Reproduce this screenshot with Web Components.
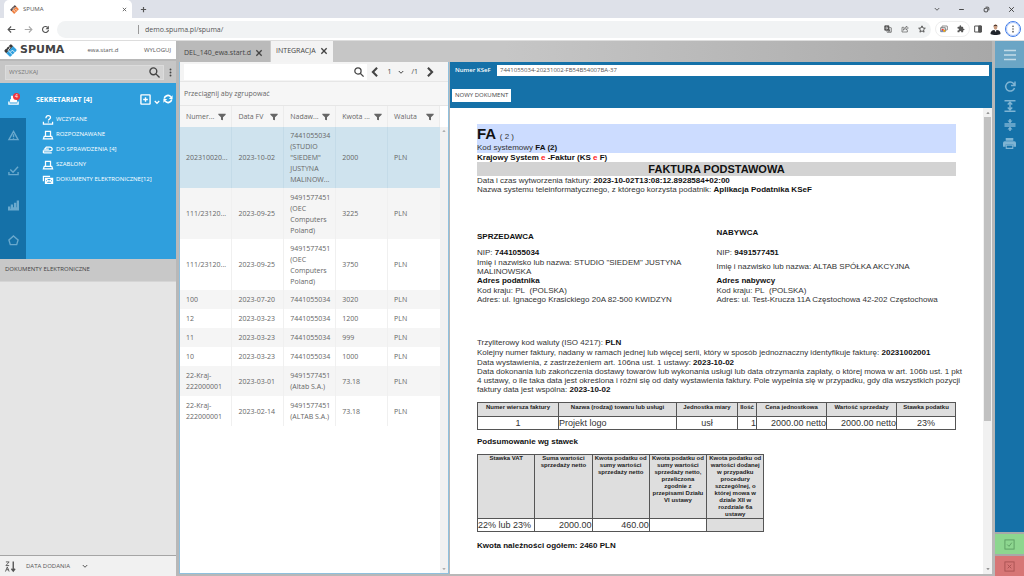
<!DOCTYPE html>
<html lang="pl">
<head>
<meta charset="utf-8">
<title>SPUMA</title>
<style>
  html, body { margin: 0; height: 100%; }
  body {
    --blue: #1571a8; --sky: #2f9fdd; --line: #b4b4b4;
    font: 7px/11px "Open Sans", "Noto Sans", sans-serif;
    color: #555; background: #e4e4e4;
    display: flex; flex-direction: column; min-height: 100vh; overflow: hidden;
  }
  spuma-app { flex: 1; min-height: 0; }
</style>
</head>
<body>
<browser-tabs></browser-tabs>
<address-bar></address-bar>
<spuma-app></spuma-app>

<script>
const ICONS = {
  logo: '<g transform="rotate(45 12 12)"><path fill="var(--a,#3a3a3a)" stroke="none" d="M4 5a2 2 0 0 1 2-2h4v18H6a2 2 0 0 1-2-2z"/><path fill="var(--b,#2f9fdd)" stroke="none" d="M10 3h8a2 2 0 0 1 2 2v14a2 2 0 0 1-2 2h-8z"/><path stroke="#fff" stroke-width="1.4" fill="none" d="M3 9h5v6h6V9h7M3 15h2M14 15h7"/></g>',
  close: '<path d="M4 4 20 20M20 4 4 20"/>',
  plus: '<path d="M12 3v18M3 12h18"/>',
  down: '<path d="M3 8l9 9 9-9"/>',
  left: '<path d="M17 2 7 12l10 10"/>',
  right: '<path d="M7 2l10 10L7 22"/>',
  minus: '<path d="M4 12h16"/>',
  restore: '<rect x="4" y="8" width="12" height="12" rx="3"/><path d="M9 4h8a3 3 0 0 1 3 3v8"/>',
  back: '<path d="M22 12H3M11 4l-8 8 8 8"/>',
  forward: '<path d="M2 12h19M13 4l8 8-8 8"/>',
  reload: '<path d="M20 13a8 8 0 1 1-2.500-7"/><path fill="currentColor" stroke="none" d="M21 2v9h-9z"/>',
  translate: '<rect x="9" y="8" width="13" height="14" rx="1"/><rect x="2" y="2" width="13" height="14" rx="1" fill="currentColor"/><path d="M13 18h6M16 13v2M18 14c-1 3-3 5-5 6M14 14c1 3 3 5 5 6"/><path stroke="#fff" d="M11 7.500C9 5 5.500 6 5.500 9.200S10 13 11 10H8.500"/>',
  share: '<path d="M9 7H3v14h16v-6"/><path d="M7 16c0-6 4-9 9-9V3l6 6-6 6v-4c-4 0-7 1-9 5z"/>',
  star: '<path d="M12 2.500l2.900 6.500 7 .7-5.300 4.700 1.600 7L12 17.700l-6.200 3.700 1.600-7L2 9.700l7-.7z"/>',
  shots: '<rect x="6" y="3" width="16" height="12" rx="1"/><path fill="#e8eaed" d="M2 8h14v12H2z"/><circle cx="8" cy="15" r="3.500" fill="#e94235" stroke="none"/><circle cx="13" cy="17" r="3" fill="#f9ab00" stroke="none"/><circle cx="6" cy="18" r="2.500" fill="#4285f4" stroke="none"/>',
  puzzle: '<path fill="currentColor" stroke="none" d="M20 11h-1.500V7a2 2 0 0 0-2-2h-4V3.500a2.500 2.500 0 0 0-5 0V5h-4a2 2 0 0 0-2 2v3.800H3a2.700 2.700 0 0 1 0 5.400H1.500V20a2 2 0 0 0 2 2h3.800v-1.500a2.700 2.700 0 0 1 5.400 0V22h3.800a2 2 0 0 0 2-2v-4H20a2.500 2.500 0 0 0 0-5z"/>',
  panel: '<path d="M2 3h20v18H2z"/><path fill="currentColor" d="M14 3h8v18h-8z"/>',
  avatar: '<path fill="#20242b" stroke="none" d="M1 22c0-6 4-9 8-9h6c5 0 8 3 8 9-6 3-16 3-22 0z"/><path fill="#fff" stroke="none" d="M9 12h5l-1 6z"/><ellipse cx="12" cy="6.500" rx="4" ry="6" fill="#c89b80" stroke="none"/><path fill="#33251e" stroke="none" d="M7.500 6C7 0 17 0 16.500 6 15 3 9 3 7.500 6z"/>',
  dots: '<g fill="currentColor" stroke="none"><circle cx="12" cy="4" r="2.500"/><circle cx="12" cy="12" r="2.500"/><circle cx="12" cy="20" r="2.500"/></g>',
  search: '<circle cx="9.500" cy="9.500" r="7.500"/><path d="M15 15l8 8"/>',
  stamp: '<path d="M6 3h12v12H6z"/><path d="M6 15H3l-2 6h22l-2-6h-3"/>',
  tray: '<path fill="currentColor" d="M8 3h9v6H8zM6 11h12v4H6z"/><path d="M2 14v6h20v-6"/>',
  question: '<path d="M7 8c0-8 11-8 11-2 0 4-5 4-5 7M1 16v6h22v-6"/><path d="M13 15.500v2.500"/>',
  swap: '<path d="M1 19h20M1 19v-5h15c8 0 8-9 0-9H8L4 10h10"/>',
  mail: '<path d="M1 15V3h16M6 8h17v12H6zM6 9l8.500 6L23 9M6 19l6-5M23 19l-6-5"/>',
  warn: '<path d="M12 3 22 21H2z"/><path d="M12 9v6M12 17v2"/>',
  check: '<path d="M2 15v6h20v-6M5 10l6 6L22 4"/>',
  chart: '<path fill="currentColor" stroke="none" d="M0 14h5v5h1v-9h5v6h2V6h5v10h1V1h5v22H0z"/>',
  home: '<path d="M12 2 22 11 19 21H5L2 11z"/>',
  addbox: '<rect x="2" y="2" width="20" height="20" rx="1"/><path d="M12 7v10M7 12h10"/>',
  sync: '<path d="M3 11a9 9 0 0 1 16-4M21 13a9 9 0 0 1-16 4"/><path fill="currentColor" stroke="none" d="M23 3v9h-9zM1 21v-9h9z"/>',
  funnel: '<path fill="currentColor" stroke="none" d="M1 2h22v3l-8 8v9l-6-2v-7L1 5z"/>',
  burger: '<path d="M0 3h24M0 12h24M0 21h24"/>',
  refresh: '<path d="M21 14a9 9 0 1 1-2-9l3 4M22 1v8h-8"/>',
  expand: '<path d="M1 1.500h22M1 22.500h22M12 5v14M7.500 9 12 4.500 16.500 9M7.500 15l4.500 4.500 4.500-4.500"/>',
  collapse: '<path d="M1 10h22M1 14h22M12 0v5M12 24v-5"/><path fill="currentColor" stroke="none" d="M7 3h10l-5 6zM7 21h10l-5-6z"/>',
  print: '<path fill="currentColor" stroke="none" d="M5 2h14v5H5zM3 8h18a3 3 0 0 1 3 3v7h-5v-4H5v4H0v-7a3 3 0 0 1 3-3z"/><path d="M6 15h12v6H6z"/>',
  okbox: '<rect x="2" y="2" width="20" height="20"/><path d="M7 12l4 4 6-8"/>',
  nobox: '<rect x="2" y="2" width="20" height="20"/><path d="M8 8l8 8M16 8l-8 8"/>',
  sort: '<path d="M18 1v20M14 17l4 5 4-5"/><path stroke-width="2" d="M2 2h7L2 10h7M1 23l4-10 4 10M3 19h5"/>',
  up: '<path fill="currentColor" stroke="none" d="M2 17l10-11 10 11z"/>',
  dn: '<path fill="currentColor" stroke="none" d="M2 7l10 11L22 7z"/>'
};

const RESET = `
  *, *::before { box-sizing: border-box; }
  button { font: inherit; color: inherit; background: none; border: 0; padding: 0; margin: 0; display: inline-flex; align-items: center; justify-content: center; }
  input { font: inherit; color: inherit; border: 0; padding: 0; margin: 0; min-width: 0; outline: 0; }
  a { color: inherit; text-decoration: none; }
`;

class Part extends HTMLElement {
  constructor() {
    super();
    this.attachShadow({ mode: 'open' });
  }
  connectedCallback() {
    this.shadowRoot.innerHTML = `<style>${RESET}${this.styles()}</style>${this.markup()}`;
  }
  styles() { return ''; }
  markup() { return ''; }
}

customElements.define('ui-icon', class extends Part {
  styles() {
    const s = this.getAttribute('size') || 10;
    return `:host { display: block; flex: none; width: ${s}px; height: ${s}px; }
      svg { display: block; width: 100%; height: 100%; overflow: visible; fill: none; stroke: currentColor; stroke-width: ${this.getAttribute('weight') || 2}; }`;
  }
  markup() { return `<svg viewBox="0 0 24 24" aria-hidden="true">${ICONS[this.getAttribute('name')]}</svg>`; }
});
const icon = (name, size, weight = 2) => `<ui-icon name="${name}" size="${size}" weight="${weight}"></ui-icon>`;

customElements.define('browser-tabs', class extends Part {
  styles() { return `
    :host { display: flex; align-items: center; height: 18px; flex: none; background: #dee1e9; padding: 0 9px 0 4px; }
    .tab { display: flex; align-items: center; gap: 4px; align-self: stretch; width: 128px; padding: 0 5px 0 6px; background: #fff; border-radius: 5px 5px 0 0; --a: #5a4a48; --b: #f08040; }
    .tab span { flex: 1; font-size: 6px; }
    .add { margin-left: 8px; }
    .win { margin-left: auto; display: flex; gap: 18px; color: #333; }`; }
  markup() { return `
    <div class="tab">${icon('logo', 9)}<span>SPUMA</span><button aria-label="Zamknij kartę">${icon('close', 5, 4)}</button></div>
    <button class="add" aria-label="Nowa karta">${icon('plus', 7, 4)}</button>
    <div class="win"><button aria-label="Karty">${icon('down', 6, 3)}</button><button aria-label="Minimalizuj">${icon('minus', 7, 3)}</button>
    <button aria-label="Przywróć">${icon('restore', 7, 3)}</button><button aria-label="Zamknij">${icon('close', 7, 3)}</button></div>`; }
});

customElements.define('address-bar', class extends Part {
  styles() { return `
    :host { box-sizing: border-box; display: flex; align-items: center; gap: 8px; height: 23px; flex: none; background: #fff; border-bottom: 1px solid #ddd; padding: 0 3px 0 7px; color: #555; }
    .fwd { color: #aaa; }
    .box { flex: 1; display: flex; align-items: center; gap: 9px; height: 17px; margin-left: -1px; padding: 0 5px 0 81px; border-radius: 9px; background: #f1f3f4; }
    .box input { flex: 1; background: none; border-left: 1px solid #999; padding-left: 6px; height: 9px; line-height: 9px; }
    .pill { display: flex; gap: 9px; padding: 3px 4px; margin: 0 -4px; border: 1px solid #eee; border-radius: 8px; }
    .menu { width: 16px; height: 16px; border: 1px solid #3f7be8; border-radius: 50%; outline: 1px solid #a9c4f8; outline-offset: -2px; margin-left: -4px; }`; }
  markup() { return `
    <button aria-label="Wstecz">${icon('back', 9, 3)}</button><button class="fwd" aria-label="Dalej">${icon('forward', 9, 3)}</button><button aria-label="Odśwież">${icon('reload', 9, 3)}</button>
    <div class="box"><input aria-label="Adres" value="demo.spuma.pl/spuma/">
      <button aria-label="Tłumacz">${icon('translate', 8)}</button><button aria-label="Udostępnij">${icon('share', 8)}</button><button aria-label="Zakładka">${icon('star', 8, 3)}</button></div>
    <div class="pill"><button aria-label="Zrzuty">${icon('shots', 8)}</button><button aria-label="Rozszerzenia">${icon('puzzle', 8)}</button></div>
    <button aria-label="Panel boczny">${icon('panel', 8, 3)}</button><button aria-label="Profil">${icon('avatar', 11)}</button>
    <button class="menu" aria-label="Menu">${icon('dots', 8)}</button>`; }
});

customElements.define('spuma-app', class extends Part {
  styles() { return `
    :host { display: grid; grid-template-columns: 176px minmax(0, 1fr) 29px; gap: 3px; background: #b8b8b8; }
    main { display: flex; flex-direction: column; min-height: 0; min-width: 0; }
    .split { flex: 1; min-height: 0; display: grid; grid-template-columns: 270px minmax(0, 1fr); gap: 1px; padding-bottom: 2px; }`; }
  markup() { return `
    <side-bar></side-bar>
    <main><work-tabs></work-tabs><div class="split"><invoice-grid></invoice-grid><invoice-view></invoice-view></div></main>
    <action-rail></action-rail>`; }
});

customElements.define('side-bar', class extends Part {
  styles() { return `
    :host { display: flex; flex-direction: column; min-height: 0; background: #e5e5e5; }
    header { display: flex; align-items: center; height: 20px; padding: 0 5px 0 4px; background: #fff; border-bottom: 2px solid #b8b8b8; }
    header b { font: bold 11px/14px "DejaVu Sans", sans-serif; color: #444; margin-left: 3px; }
    .user { margin-left: 23px; font-size: 6px; }
    .out { margin-left: auto; font-size: 6px; }
    .search { display: flex; align-items: center; gap: 2px; height: 22px; padding: 0 1px 0 5px; background: #c6c6c6; color: #444; }
    .search label { flex: 1; display: flex; align-items: center; height: 15px; padding: 0 3px; background: #d3d3d3; border: 1px solid #dcdcdc; }
    .search input { flex: 1; background: none; font-size: 6px; }
    .search input::placeholder { color: #777; opacity: 1; }
    h2 { margin: 0; height: 23px; padding: 5px; font-size: 6px; line-height: 11px; font-weight: 400; color: #444; background: #c8c8c8; border-bottom: 1px solid #d5d5d5; }
    footer { margin-top: auto; display: flex; align-items: center; gap: 10px; height: 21px; padding: 0 5px; border-top: 1px solid #a5a5a5; background: #f1f1f1; font-size: 6px; }
    footer button { gap: 12px; }`; }
  markup() { return `
    <header>${icon('logo', 13)}<b>SPUMA</b><span class="user">ewa.start.d</span><a class="out" href="#">WYLOGUJ</a></header>
    <div class="search"><label><input placeholder="WYSZUKAJ" aria-label="Wyszukaj">${icon('search', 11, 3)}</label><button aria-label="Więcej">${icon('dots', 9)}</button></div>
    <module-menu></module-menu>
    <h2>DOKUMENTY ELEKTRONICZNE</h2>
    <footer><button aria-label="Sortuj">${icon('sort', 11, 3)}</button><button>DATA DODANIA ${icon('down', 6, 4)}</button></footer>`; }
});

customElements.define('module-menu', class extends Part {
  styles() { return `
    :host { display: grid; grid-template-columns: 26px 1fr; background: var(--sky); color: #fff; height: 176px; }
    nav { display: grid; grid-auto-rows: 35px; background: var(--blue); color: #6aa9cd; }
    nav button { position: relative; }
    nav button.on { background: var(--sky); color: #fff; }
    .badge { position: absolute; left: 13px; top: 10px; width: 7px; height: 7px; border-radius: 50%; background: #f0323c; color: #fff; font-size: 5px; line-height: 7px; text-align: center; }
    .body { padding: 8px 3px 0 10px; }
    .head { display: flex; align-items: center; height: 16px; font-weight: 700; }
    .head h1 { margin: 0 auto 0 0; font-size: 7px; }
    .head div { display: flex; gap: 3px; align-items: center; }
    .head div :nth-child(2) { align-self: end; }
    ul { list-style: none; margin: 5px 0 0; padding: 0 0 0 7px; font-size: 6px; font-weight: 500; }
    li a { display: flex; align-items: center; gap: 3px; height: 15px; white-space: nowrap; }`; }
  markup() {
    const items = [['question', 'WCZYTANE'], ['stamp', 'ROZPOZNAWANE'], ['swap', 'DO SPRAWDZENIA [4]'], ['stamp', 'SZABLONY'], ['mail', 'DOKUMENTY ELEKTRONICZNE[12]']];
    const nav = [['warn', 'Alerty'], ['check', 'Zadania'], ['chart', 'Raporty'], ['home', 'Start']];
    return `<nav><button class="on" aria-label="Sekretariat">${icon('tray', 11, 3)}<span class="badge">4</span></button>
      ${nav.map(n => `<button aria-label="${n[1]}">${icon(n[0], 11, 3)}</button>`).join('')}</nav>
      <div class="body"><div class="head"><h1>SEKRETARIAT [4]</h1><div><button aria-label="Dodaj">${icon('addbox', 11, 3)}</button><button aria-label="Rozwiń">${icon('down', 6, 5)}</button><button aria-label="Odśwież">${icon('sync', 10, 4)}</button></div></div>
      <ul>${items.map(i => `<li><a href="#">${icon(i[0], 10, 3)}${i[1]}</a></li>`).join('')}</ul></div>`;
  }
});

customElements.define('work-tabs', class extends Part {
  styles() { return `
    :host { display: flex; align-items: stretch; height: 21px; flex: none; background: linear-gradient(90deg, #c6c6c6 40%, #a8a8a8); color: #444; }
    div { display: flex; align-items: center; gap: 4px; padding: 2px 7px 0 5px; background: #bababa; border-right: 1px solid #ccc; white-space: nowrap; }
    .on { background: #f3f3f3; padding: 0 5px 2px; border: 0; }`; }
  markup() { return `
    <div><a href="#">DEL_140_ewa.start.d</a><button aria-label="Zamknij">${icon('close', 8, 4)}</button></div>
    <div class="on"><a href="#">INTEGRACJA</a><button aria-label="Zamknij">${icon('close', 8, 4)}</button></div>`; }
});

const ROWS = [
  [5, '202310020...', '2023-10-02', '7441055034<br>(STUDIO<br>"SIEDEM"<br>JUSTYNA<br>MALINOW...', '2000'],
  [4, '111/23120...', '2023-09-25', '9491577451<br>(OEC<br>Computers<br>Poland)', '3225'],
  [4, '111/23120...', '2023-09-25', '9491577451<br>(OEC<br>Computers<br>Poland)', '3750'],
  [1, '100', '2023-07-20', '7441055034', '3020'],
  [1, '12', '2023-03-23', '7441055034', '1200'],
  [1, '11', '2023-03-23', '7441055034', '999'],
  [1, '10', '2023-03-23', '7441055034', '1000'],
  [2, '22-Kraj-<br>222000001', '2023-03-01', '9491577451<br>(Altab S.A.)', '73.18'],
  [2, '22-Kraj-<br>222000001', '2023-02-14', '9491577451<br>(ALTAB S.A.)', '73.18']
];

customElements.define('invoice-grid', class extends Part {
  styles() { return `
    :host { display: flex; flex-direction: column; min-height: 0; background: #fff; border: 1px solid #8fc0de; border-top: 0; color: #666; }
    .bar { display: flex; align-items: center; height: 20px; flex: none; padding: 0 13px 0 4px; background: #f4f4f4; border-bottom: 1px solid #e6e6e6; }
    .bar label { display: flex; align-items: center; width: 183px; height: 16px; padding-right: 3px; background: #fff; color: #444; }
    .bar input { flex: 1; background: none; }
    .pager { margin-left: auto; display: flex; align-items: center; gap: 7px; color: #444; }
    .group { height: 24px; flex: none; padding: 6px 4px; background: #f6f6f6; border-bottom: 1px solid #e6e6e6; }
    .wrap { flex: 1; min-height: 0; display: grid; grid-template-columns: 1fr 8px; }
    table { width: 100%; border-collapse: collapse; table-layout: fixed; }
    th { height: 21px; padding: 0 2px 0 6px; text-align: left; font-weight: 400; background: #f6f6f6; border-right: 1px solid #ececec; }
    th span { display: flex; justify-content: space-between; align-items: center; padding-right: 3px; white-space: nowrap; }
    td { padding: 3px 2px 3px 6px; border-right: 1px solid #f0f0f0; white-space: nowrap; }
    td:last-child { border: 0; }
    tr:nth-child(even) { background: #f5f5f5; }
    .l1 td { height: 19px; } .l2 td { height: 30px; } .l4 td { height: 51px; } .l5 td { height: 61px; border-color: #c4dbe8; }
    tr.l5 { background: #cfe3ee; }
    .scroll { display: flex; flex-direction: column; justify-content: space-between; align-items: center; margin-top: 21px; padding: 2px 0; background: #f1f1f1; color: #999; }`; }
  markup() { return `
    <div class="bar"><label><input aria-label="Szukaj">${icon('search', 10, 3)}</label>
      <div class="pager"><button aria-label="Poprzednia">${icon('left', 10, 5)}</button><span>1</span>${icon('down', 6, 4)}<span>/1</span><button aria-label="Następna">${icon('right', 10, 5)}</button></div></div>
    <div class="group">Przeciągnij aby zgrupować</div>
    <div class="wrap"><div><table><thead><tr>${['Numer...', 'Data FV', 'Nadaw...', 'Kwota ...', 'Waluta'].map(h => `<th><span>${h}${icon('funnel', 8)}</span></th>`).join('')}</tr></thead>
    <tbody>${ROWS.map((r, i) => `<tr class="l${r[0]}">${r.slice(1).map(c => `<td>${c}</td>`).join('')}<td>PLN</td></tr>`).join('')}</tbody></table></div>
    <div class="scroll">${icon('up', 4)}${icon('dn', 4)}</div></div>`; }
});

customElements.define('invoice-view', class extends Part {
  styles() { return `
    :host { display: flex; flex-direction: column; min-height: 0; min-width: 0; background: #fff; }
    header { flex: none; height: 46px; padding: 3px 3px 0 2px; background: var(--blue); }
    label { display: flex; align-items: center; padding-left: 3px; color: #fff; font-size: 6px; font-weight: 600; }
    label span { width: 42px; }
    label input { flex: 1; height: 11px; padding: 0 3px; background: #fff; color: #555; font-weight: 400; }
    header button { margin-top: 13px; height: 13px; padding: 0 3px; background: #fff; color: #444; font-size: 6px; }
    .pane { flex: 1; min-height: 0; display: grid; grid-template-columns: minmax(0, 1fr) 9px; }
    .scroll { display: flex; flex-direction: column; align-items: center; padding: 3px 0; background: #f1f1f1; color: #777; }
    .thumb { width: 7px; height: 66%; margin: 2px 0 auto; background: #c1c1c1; }`; }
  markup() { return `
    <header><label><span>Numer KSeF</span><input value="7441055034-20231002-FB54B54007BA-37"></label><button>NOWY DOKUMENT</button></header>
    <div class="pane"><ksef-invoice></ksef-invoice><div class="scroll">${icon('up', 4)}<div class="thumb"></div>${icon('dn', 4)}</div></div>`; }
});

customElements.define('ksef-invoice', class extends Part {
  styles() { return `
    :host { display: block; overflow: hidden; padding: 16px 27px 0; font: 8px/9px "Liberation Sans", Arial, sans-serif; color: #333; }
    p, h1, h2, h3 { margin: 0; font-size: 8px; }
    b, h1, h2, h3 { color: #111; }
    i { color: #f22; font-style: normal; }
    .band { background: #ccdcff; height: 29px; }
    .band h1 { height: 19px; font-size: 15px; line-height: 19px; }
    .band small { font-size: 8px; line-height: 9px; font-weight: 400; color: #333; }
    h2 { height: 14px; font-size: 11px; line-height: 14px; text-align: center; background: #d3d3d3; }
    .parties { display: grid; grid-template-columns: 1fr 1fr; margin-top: 32px; height: 112px; }
    .parties h3 { padding-top: 2px; height: 18px; }
    .seller { padding: 4px 30px 0 0; } .buyer h3 { height: 22px; }
    .name { display: flex; align-items: center; height: 19px; }
    .parties p.name + p { line-height: 10px; }
    .facts { line-height: 10px; } .facts .long { line-height: 9px; margin-right: -13px; }
    .facts p:nth-child(3) { line-height: 9px; }
    table { border-collapse: collapse; table-layout: fixed; color: #333; }
    th, td { border: 1px solid #555; padding: 0; }
    th { font-size: 6px; line-height: 7px; font-weight: 700; background: #dedede; vertical-align: top; color: #222; }
    td { height: 13px; font-size: 9px; line-height: 12px; }
    .r { text-align: right; } .c { text-align: center; }
    .items { width: 100%; margin: 8px 0 7px; } .items th { height: 14px; padding-top: 1px; }
    .vat { width: 60%; margin: 8px 0 9px; } .vat th { padding: 0 1px; } .vat .e { background: #dedede; }`; }
  markup() { return `
    <div class="band"><h1>FA <small>( 2 )</small></h1><p>Kod systemowy <b>FA (2)</b></p></div>
    <p><b>Krajowy System <i>e</i> -Faktur (KS <i>e</i> F)</b></p>
    <h2>FAKTURA PODSTAWOWA</h2>
    <p>Data i czas wytworzenia faktury: <b>2023-10-02T13:08:12.8928584+02:00</b></p>
    <p>Nazwa systemu teleinformatycznego, z którego korzysta podatnik: <b>Aplikacja Podatnika KSeF</b></p>
    <div class="parties">
      <section class="seller"><h3>SPRZEDAWCA</h3><p>NIP: <b>7441055034</b></p><p class="name">Imię i nazwisko lub nazwa: STUDIO "SIEDEM" JUSTYNA MALINOWSKA</p><p><b>Adres podatnika</b></p><p>Kod kraju: PL&nbsp; (POLSKA)</p><p>Adres: ul. Ignacego Krasickiego 20A 82-500 KWIDZYN</p></section>
      <section class="buyer"><h3>NABYWCA</h3><p>NIP: <b>9491577451</b></p><p class="name">Imię i nazwisko lub nazwa: ALTAB SPÓŁKA AKCYJNA</p><p><b>Adres nabywcy</b></p><p>Kod kraju: PL&nbsp; (POLSKA)</p><p>Adres: ul. Test-Krucza 11A Częstochowa 42-202 Częstochowa</p></section>
    </div>
    <div class="facts"><p>Trzyliterowy kod waluty (ISO 4217): <b>PLN</b></p>
    <p>Kolejny numer faktury, nadany w ramach jednej lub więcej serii, który w sposób jednoznaczny identyfikuje fakturę: <b>20231002001</b></p>
    <p>Data wystawienia, z zastrzeżeniem art. 106na ust. 1 ustawy: <b>2023-10-02</b></p>
    <p class="long">Data dokonania lub zakończenia dostawy towarów lub wykonania usługi lub data otrzymania zapłaty, o której mowa w art. 106b ust. 1 pkt 4&nbsp;ustawy, o ile taka data jest określona i różni się od daty wystawienia faktury. Pole wypełnia się w przypadku, gdy dla wszystkich pozycji faktury data jest wspólna: <b>2023-10-02</b></p></div>
    <table class="items"><colgroup><col style="width:81px"><col style="width:118px"><col style="width:61px"><col style="width:19px"><col style="width:70px"><col style="width:70px"><col></colgroup>
      <tr><th>Numer wiersza faktury</th><th>Nazwa (rodzaj) towaru lub usługi</th><th>Jednostka miary</th><th>Ilość</th><th>Cena jednostkowa</th><th>Wartość sprzedaży</th><th>Stawka podatku</th></tr>
      <tr><td class="c">1</td><td>Projekt logo</td><td class="c">usł</td><td class="r">1</td><td class="r">2000.00 netto</td><td class="r">2000.00 netto</td><td class="c">23%</td></tr></table>
    <h3>Podsumowanie wg stawek</h3>
    <table class="vat"><tr><th>Stawka VAT</th><th>Suma wartości sprzedaży netto</th><th>Kwota podatku od sumy wartości sprzedaży netto</th><th>Kwota podatku od sumy wartości sprzedaży netto, przeliczona zgodnie z przepisami Działu VI ustawy</th><th>Kwota podatku od wartości dodanej w przypadku procedury szczególnej, o której mowa w dziale XII w rozdziale 6a ustawy</th></tr>
      <tr><td>22% lub 23%</td><td class="r">2000.00</td><td class="r">460.00</td><td></td><td class="e"></td></tr></table>
    <h3>Kwota należności ogółem: 2460 PLN</h3>`; }
});

customElements.define('action-rail', class extends Part {
  styles() { return `
    :host { display: flex; flex-direction: column; background: var(--blue); color: #7fb4d3; }
    button { height: 19px; flex: none; }
    .top { height: 27px; margin-bottom: 9px; background: #6ba5c5; color: #c3dbe7; }
    .ok, .no { height: 22px; border-top: 2px solid #a8a8a8; }
    .ok { margin-top: auto; background: #8dd68f; color: #5c9c62; }
    .no { background: #d77676; color: #a85252; }`; }
  markup() { return `
    <button class="top" aria-label="Menu">${icon('burger', 12, 3)}</button>
    <button aria-label="Odśwież">${icon('refresh', 12, 3)}</button><button aria-label="Rozwiń">${icon('expand', 12, 3)}</button>
    <button aria-label="Zwiń">${icon('collapse', 12, 3)}</button><button aria-label="Drukuj">${icon('print', 13)}</button>
    <button class="ok" aria-label="Zatwierdź">${icon('okbox', 11)}</button><button class="no" aria-label="Odrzuć">${icon('nobox', 11)}</button>`; }
});
</script>
</body>
</html>
